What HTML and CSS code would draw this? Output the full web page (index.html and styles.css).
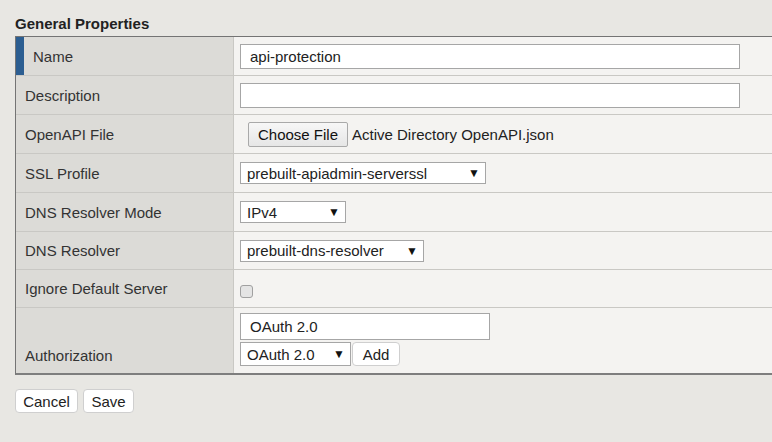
FILE: index.html
```html
<!DOCTYPE html>
<html>
<head>
<meta charset="utf-8">
<link rel="stylesheet" href="styles.css">
</head>
<body>
<div class="page">
  <h2 class="title">General Properties</h2>
  <div class="props">
    <div class="row">
      <div class="label active">Name</div>
      <div class="value"><input class="text wide" type="text" value="api-protection"></div>
    </div>
    <div class="row">
      <div class="label">Description</div>
      <div class="value"><input class="text wide" type="text" value=""></div>
    </div>
    <div class="row">
      <div class="label">OpenAPI File</div>
      <div class="value file"><span class="filebtn">Choose File</span><span class="filename">Active Directory OpenAPI.json</span></div>
    </div>
    <div class="row">
      <div class="label">SSL Profile</div>
      <div class="value"><span class="select ssl"><span>prebuilt-apiadmin-serverssl</span><span class="arrow">▼</span></span></div>
    </div>
    <div class="row">
      <div class="label">DNS Resolver Mode</div>
      <div class="value"><span class="select ipv"><span>IPv4</span><span class="arrow">▼</span></span></div>
    </div>
    <div class="row short">
      <div class="label">DNS Resolver</div>
      <div class="value"><span class="select dns"><span>prebuilt-dns-resolver</span><span class="arrow">▼</span></span></div>
    </div>
    <div class="row short">
      <div class="label">Ignore Default Server</div>
      <div class="value"><span class="checkbox"></span></div>
    </div>
    <div class="row auth">
      <div class="label bottom">Authorization</div>
      <div class="value stack">
        <input class="text authinput" type="text" value="OAuth 2.0">
        <div class="inline">
          <span class="select oauth"><span>OAuth 2.0</span><span class="arrow">▼</span></span><span class="btn add">Add</span>
        </div>
      </div>
    </div>
  </div>
  <div class="actions">
    <span class="btn cancel">Cancel</span>
    <span class="btn save">Save</span>
  </div>
</div>
</body>
</html>
```

FILE: styles.css
```css
html, body {
  margin: 0;
  padding: 0;
  background: #e8e7e3;
  overflow: hidden;
}
body {
  font-family: "Liberation Sans", Arial, sans-serif;
  font-size: 15px;
  color: #333;
}
.page {
  padding: 15px 0 0 15px;
}
.title {
  margin: 0 0 4px 0;
  font-size: 15px;
  line-height: 17px;
  font-weight: bold;
  color: #222;
}
.props {
  border-top: 1px solid #747474;
  border-left: 1px solid #747474;
  border-bottom: 2px solid #7e7e7e;
}
.row {
  display: grid;
  grid-template-columns: 218px 1fr;
  height: 38px;
  border-bottom: 1px solid #c9c8c4;
}
.row.short {
  height: 37px;
}
.row:last-child {
  border-bottom: none;
}
.row.auth {
  height: 65px;
}
.label {
  background: #dcdbd7;
  border-right: 1px solid #c9c8c4;
  display: flex;
  align-items: center;
  padding-left: 9px;
  color: #333;
}
.label.active {
  border-left: 8px solid #2c5e91;
  padding-left: 9px;
}
.label.bottom {
  align-items: flex-end;
  padding-bottom: 9px;
}
.value {
  background: #f4f3f1;
  display: flex;
  align-items: center;
  padding-left: 6px;
}
.text {
  box-sizing: border-box;
  height: 25px;
  border: 1px solid #a6a6a6;
  background: #fff;
  font-family: "Liberation Sans", Arial, sans-serif;
  font-size: 15px;
  color: #222;
  padding: 0 9px;
  margin: 0;
  outline: none;
}
.wide {
  width: 500px;
}
.file {
  padding-left: 14px;
}
.filebtn {
  box-sizing: border-box;
  height: 25px;
  width: 100px;
  display: inline-flex;
  align-items: center;
  justify-content: center;
  border: 1px solid #a9a9a9;
  border-radius: 2px;
  background: linear-gradient(#f7f7f7, #e6e6e6);
  color: #111;
}
.filename {
  margin-left: 4px;
  color: #222;
}
.select {
  box-sizing: border-box;
  height: 22px;
  display: inline-flex;
  align-items: center;
  justify-content: space-between;
  border: 1px solid #a6a6a6;
  background: #fff;
  padding: 0 5px 0 6px;
  color: #222;
}
.arrow {
  font-size: 12px;
  color: #111;
}
.ssl { width: 246px; }
.ipv { width: 106px; }
.dns { width: 184px; }
.oauth { width: 111px; height: 24px; }
.checkbox {
  box-sizing: border-box;
  width: 13px;
  height: 13px;
  border: 1px solid #a0a0a0;
  border-radius: 3px;
  background: #e4e4e4;
  margin-top: 5px;
}
.stack {
  flex-direction: column;
  align-items: flex-start;
  justify-content: flex-start;
  padding-top: 5px;
  gap: 2px;
}
.authinput {
  width: 250px;
  height: 27px;
}
.inline {
  display: flex;
  gap: 1px;
}
.btn {
  box-sizing: border-box;
  height: 24px;
  display: inline-flex;
  align-items: center;
  justify-content: center;
  padding: 0 7px;
  background: #fff;
  border: 1px solid #cfcfcf;
  border-radius: 4px;
  color: #222;
}
.add {
  width: 48px;
}
.cancel {
  width: 63px;
}
.save {
  width: 51px;
}
.actions {
  display: flex;
  gap: 5px;
  margin-top: 14px;
}
```
